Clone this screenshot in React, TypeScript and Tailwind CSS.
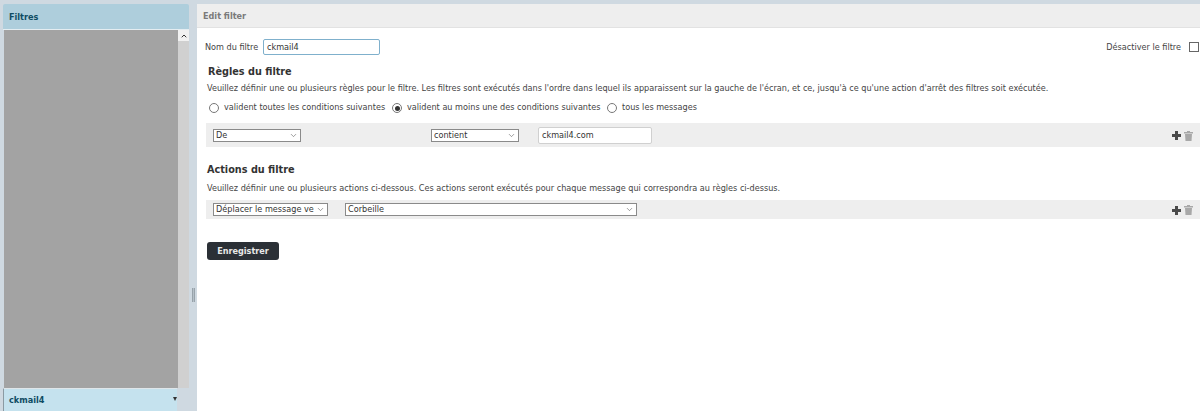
import { ChevronDown, ChevronUp } from "lucide-react";

const font = "font-['DejaVu_Sans',sans-serif]";

const Select = ({ label, className }: { label: string; className: string }) => (
  <div className={`flex items-center justify-between h-[13px] bg-white border border-[#8a8a8a] pl-[2px] pr-[2px] text-[8.15px] text-[#333] ${className}`}>
    <span className="whitespace-nowrap">{label}</span>
    <ChevronDown size={9} strokeWidth={1.5} className="shrink-0 text-[#555]" />
  </div>
);

const Radio = ({ checked, label, className }: { checked?: boolean; label: string; className: string }) => (
  <label className={`flex items-center gap-[5px] ${className}`}>
    <span className="flex items-center justify-center w-[10px] h-[10px] rounded-full border border-[#777] bg-white mt-[2px]">
      {checked && <span className="w-[5px] h-[5px] rounded-full bg-[#333]" />}
    </span>
    <span className="whitespace-nowrap">{label}</span>
  </label>
);

const RowIcons = () => (
  <div className="flex items-center gap-[3px] ml-auto mr-[7px] mt-[1px]">
    <svg width="9" height="9" viewBox="0 0 9 9">
      <path d="M3 0h3v3h3v3H6v3H3V6H0V3h3z" fill="#4a4a4a" />
    </svg>
    <svg width="9" height="10" viewBox="0 0 9 10">
      <path d="M3 0h3v1h3v1.5H0V1h3zM1 3h7l-.5 7h-6z" fill="#a8a8a8" />
    </svg>
  </div>
);

const App = () => {
  return (
    <div className={`${font} flex w-[1200px] h-[411px] overflow-hidden bg-[#cfd9e1] pt-[4px] text-[8.15px] text-[#444]`}>
      {/* left panel */}
      <div className="flex flex-col w-[186px] ml-[3px] shrink-0">
        <div className="h-[25px] bg-[#aecedc] rounded-t-[2px] pl-[6px] pt-[1px] flex items-center font-bold text-[#0f4c63]">
          Filtres
        </div>
        <div className="flex flex-1 min-h-0 border-t border-[#e4edf1] pl-[1px]">
          <div className="flex-1 bg-[#a3a3a3]" />
          <div className="w-[11px] bg-[#d0d0d0]">
            <div className="flex items-center justify-center h-[11px] bg-[#f1f1f1]">
              <ChevronUp size={8} strokeWidth={3} className="text-[#333]" />
            </div>
          </div>
        </div>
        <div className="flex items-center justify-between h-[23px] bg-[#c5e2ee] border-t border-[#dfe6ea] border-l border-l-[#8b9aa3] mr-[12px] pl-[5px] font-bold text-[#0f4c63]">
          <span>ckmail4</span>
          <span className="w-0 h-0 border-x-[2px] border-x-transparent border-t-[4px] border-t-[#333] mb-[2px]" />
        </div>
      </div>

      {/* splitter */}
      <div className="flex items-center justify-center w-[8px] shrink-0 pt-[175px]">
        <div className="w-[3px] h-[14px] border-x border-[#98a3ab] bg-[#b5c0c8]" />
      </div>

      {/* main panel */}
      <div className="flex flex-col flex-1 min-w-0 bg-white">
        <div className="h-[24px] shrink-0 bg-[#eeeeee] border-b border-[#e2e2e2] pl-[6px] pt-[1px] flex items-center font-bold text-[#7a7a7a]">
          Edit filter
        </div>
        <div className="flex flex-col pt-[11px]">
          <div className="flex items-center h-[16px] pl-[8px] pr-[1px]">
            <span className="w-[58px]">Nom du filtre</span>
            <div className="flex items-center w-[117px] h-[16px] pl-[3px] border border-[#7fb0cc] rounded-[2px] text-[#333]">
              ckmail4
            </div>
            <span className="ml-auto">Désactiver le filtre</span>
            <span className="w-[10px] h-[10px] ml-[8px] border border-[#666] bg-white" />
          </div>

          <h2 className="pl-[11px] mt-[8px] h-[18px] flex items-center text-[9.7px] font-bold text-[#333]">Règles du filtre</h2>
          <p className="pl-[10px] mt-[1px] h-[12px] whitespace-nowrap leading-[12px]">
            Veuillez définir une ou plusieurs règles pour le filtre. Les filtres sont exécutés dans l'ordre dans lequel ils apparaissent sur la gauche de l'écran, et ce, jusqu'à ce qu'une action d'arrêt des filtres soit exécutée.
          </p>
          <div className="flex items-center pl-[12px] mt-[7px] h-[12px]">
            <Radio label="valident toutes les conditions suivantes" className="w-[183px]" />
            <Radio checked label="valident au moins une des conditions suivantes" className="w-[215px]" />
            <Radio label="tous les messages" className="w-[100px]" />
          </div>

          <div className="flex items-center h-[24px] mt-[10px] ml-[9px] bg-[#eeeeee] pl-[7px]">
            <Select label="De" className="w-[88px]" />
            <Select label="contient" className="w-[88px] ml-[130px]" />
            <div className="flex items-center w-[114px] h-[17px] ml-[19px] pl-[3px] bg-white border border-[#d0d0d0] rounded-[2px] text-[#333]">
              ckmail4.com
            </div>
            <RowIcons />
          </div>

          <h2 className="pl-[10px] mt-[14px] h-[18px] flex items-center text-[9.7px] font-bold text-[#333]">Actions du filtre</h2>
          <p className="pl-[10px] mt-[3px] h-[12px] whitespace-nowrap leading-[12px]">
            Veuillez définir une ou plusieurs actions ci-dessous. Ces actions seront exécutés pour chaque message qui correspondra au règles ci-dessus.
          </p>

          <div className="flex items-center h-[19px] mt-[6px] ml-[9px] bg-[#eeeeee] pl-[7px]">
            <Select label="Déplacer le message ve" className="w-[115px]" />
            <Select label="Corbeille" className="w-[292px] ml-[17px]" />
            <RowIcons />
          </div>

          <button className="self-start flex items-center justify-center w-[72px] h-[18px] mt-[23px] ml-[10px] rounded-[3px] bg-[#2b3036] font-bold text-[#e8e8e8]">
            Enregistrer
          </button>
        </div>
      </div>
    </div>
  );
};

export default App;
